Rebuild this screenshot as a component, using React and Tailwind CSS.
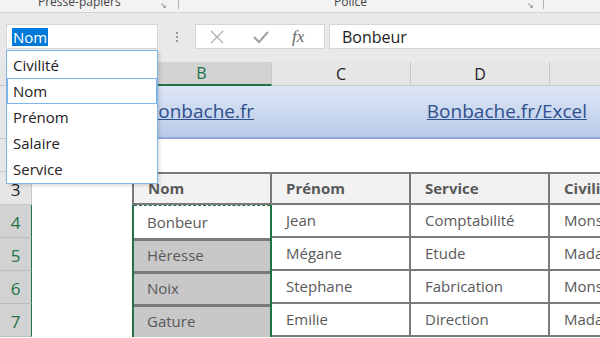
const ui = { fontFamily: '"Open Sans", "Noto Sans", sans-serif' };

const columns = [
    { key: 'A', width: 'w-[100px]' },
    { key: 'B', width: 'w-[140px]' },
    { key: 'C', width: 'w-[139px]' },
    { key: 'D', width: 'w-[139px]' },
    { key: 'E', width: 'w-[140px]' },
];

const people = [
    ['Bonbeur', 'Jean', 'Comptabilité', 'Monsieur'],
    ['Hèresse', 'Mégane', 'Etude', 'Madame'],
    ['Noix', 'Stephane', 'Fabrication', 'Monsieur'],
    ['Gature', 'Emilie', 'Direction', 'Madame'],
];

const fields = ['Civilité', 'Nom', 'Prénom', 'Salaire', 'Service'];

function RowHeader({ label, selected }) {
    return (
        <div
            className={`flex w-[32px] shrink-0 items-center justify-center border-b border-r pt-[3px] text-[17px] ${
                selected
                    ? 'border-b-[#bdbdbd] border-r-[#217346] bg-[#d2d2d2] text-[#217346]'
                    : 'border-b-[#c8c8c8] border-r-[#c8c8c8] bg-[#e6e6e6] text-[#222]'
            }`}
        >
            {label}
        </div>
    );
}

function Ribbon() {
    return (
        <div className="relative h-[13px] overflow-hidden border-b border-[#d4d4d4] bg-[#f3f3f3] text-[12px] leading-none text-[#444]">
            <span className="absolute left-[38px] top-[-4px]">Presse-papiers</span>
            <span className="absolute left-[160px] top-[1px] text-[8px] text-[#777]">↘</span>
            <span className="absolute left-[178px] top-0 h-[9px] w-px bg-[#b5b5b5]" />
            <span className="absolute left-[334px] top-[-4px]">Police</span>
            <span className="absolute left-[527px] top-[1px] text-[8px] text-[#777]">↘</span>
            <span className="absolute left-[543px] top-0 h-[9px] w-px bg-[#b5b5b5]" />
        </div>
    );
}

function FormulaBar() {
    return (
        <div className="flex h-[49px] items-center bg-[#e9e9e9] pb-[2px] text-[15px]">
            <div className="ml-[6px] flex h-[25px] w-[152px] items-center border border-[#d6d6d6] bg-white px-[5px]">
                <span className="bg-[#0078d7] px-[1px] leading-[18px] text-white">Nom</span>
            </div>
            <div className="flex w-[37px] flex-col items-center gap-[2px]">
                <span className="h-[2px] w-[2px] bg-[#9a9a9a]" />
                <span className="h-[2px] w-[2px] bg-[#9a9a9a]" />
                <span className="h-[2px] w-[2px] bg-[#9a9a9a]" />
            </div>
            <div className="flex h-[25px] w-[130px] items-center border border-[#d6d6d6] bg-white text-[#a6a6a6]">
                <svg width="14" height="14" viewBox="0 0 14 14" className="ml-[14px]">
                    <path d="M1 1 L13 13 M13 1 L1 13" stroke="#b0b0b0" strokeWidth="1.4" fill="none" />
                </svg>
                <svg width="16" height="14" viewBox="0 0 16 14" className="ml-[29px]">
                    <path d="M1 7 L6 12 L15 2" stroke="#a0a0a0" strokeWidth="2" fill="none" />
                </svg>
                <span
                    className="ml-[23px] text-[17px] italic text-[#666]"
                    style={{ fontFamily: '"Liberation Serif", serif' }}
                >
                    fx
                </span>
            </div>
            <div className="ml-[4px] flex h-[25px] flex-1 items-center border border-r-0 border-[#d6d6d6] bg-white pl-[12px] text-[16px] text-[#222]">
                Bonbeur
            </div>
        </div>
    );
}

function ColumnHeaders() {
    return (
        <div className="flex h-[24px]">
            <div className="w-[32px] shrink-0 border-b border-r border-[#c8c8c8] bg-[#e6e6e6]" />
            {columns.map((col) => (
                <div
                    key={col.key}
                    className={`${col.width} flex shrink-0 items-center justify-center border-r text-[16px] ${
                        col.key === 'B'
                            ? 'border-b-2 border-b-[#217346] border-r-[#c8c8c8] bg-[#d2d2d2] text-[#217346]'
                            : 'border-b border-[#c8c8c8] bg-[#e6e6e6] text-[#222]'
                    }`}
                >
                    {col.key}
                </div>
            ))}
        </div>
    );
}

function TableCell({ children, className = '' }) {
    return (
        <div className={`flex shrink-0 items-center border-b-2 border-r-2 border-[#7a7a7a] pl-[14px] ${className}`}>
            {children}
        </div>
    );
}

function Sheet() {
    return (
        <div className="text-[15px] text-[#595959]">
            <div className="flex h-[53px]">
                <RowHeader label="" />
                <div className="flex flex-1 items-center justify-between border-b-2 border-[#8ea9db] bg-gradient-to-b from-[#dde6f5] to-[#b9cbe9] pl-[114px] pr-[13px] text-[19px] text-[#2f4f8f] underline">
                    <span>Bonbache.fr</span>
                    <span>Bonbache.fr/Excel</span>
                </div>
            </div>
            <div className="flex h-[33px]">
                <RowHeader label="" />
                <div className="flex-1 bg-white" />
            </div>
            <div className="flex h-[33px]">
                <RowHeader label="3" />
                <div className="w-[100px] shrink-0 bg-white" />
                <div className="flex flex-1 border-t-2 border-l-2 border-[#7a7a7a] bg-[#f2f2f2] font-bold">
                    <TableCell className="w-[138px]">Nom</TableCell>
                    <TableCell className="w-[139px]">Prénom</TableCell>
                    <TableCell className="w-[139px]">Service</TableCell>
                    <TableCell className="w-[100px] overflow-hidden whitespace-nowrap border-r-0">Civilité</TableCell>
                </div>
            </div>
            {people.map((row, i) => (
                <div key={row[0]} className="flex h-[33px]">
                    <RowHeader label={String(i + 4)} selected />
                    <div className="w-[100px] shrink-0 bg-white" />
                    <div className="flex w-[140px] shrink-0 border-x-2 border-[#217346]">
                        <div
                            className={`flex flex-1 items-center pl-[13px] ${
                                i === 0
                                    ? 'border-t border-dashed border-[#217346] bg-white'
                                    : 'border-t-[3px] border-[#7a7a7a] bg-[#c8c8c8] pb-[2px]'
                            }`}
                        >
                            {row[0]}
                        </div>
                    </div>
                    <div className="flex flex-1 bg-white">
                        <TableCell className="w-[139px]">{row[1]}</TableCell>
                        <TableCell className="w-[139px]">{row[2]}</TableCell>
                        <TableCell className="w-[100px] overflow-hidden whitespace-nowrap border-r-0">{row[3]}</TableCell>
                    </div>
                </div>
            ))}
        </div>
    );
}

export default function App() {
    return (
        <div className="relative h-[338px] w-[600px] overflow-hidden bg-white" style={ui}>
            <Ribbon />
            <FormulaBar />
            <ColumnHeaders />
            <Sheet />

            <div className="absolute left-[6px] top-[50px] w-[152px] border border-[#7eb4ea] bg-white py-px text-[15px] text-[#222] shadow-[2px_2px_3px_rgba(0,0,0,0.12)]">
                {fields.map((field) => (
                    <div
                        key={field}
                        className={`flex h-[26px] items-center px-[5px] ${
                            field === 'Nom' ? 'border border-[#7eb4ea]' : 'border border-transparent'
                        }`}
                    >
                        {field}
                    </div>
                ))}
            </div>
        </div>
    );
}
